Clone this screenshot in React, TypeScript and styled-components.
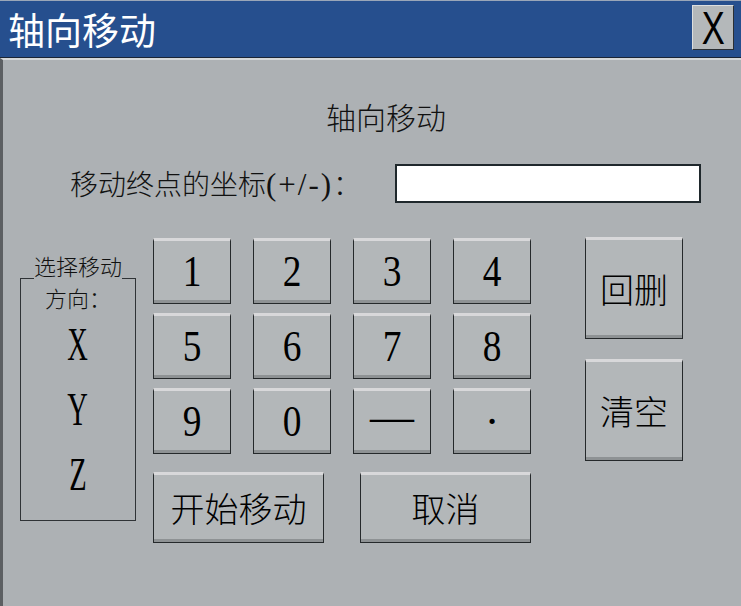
import styled, { createGlobalStyle } from "styled-components";

const GlobalStyle = createGlobalStyle`
	html, body {
		margin: 0;
		padding: 0;
		background: #adb1b4;
	}
`;

const cjk = `"Noto Sans CJK SC", sans-serif`;
const serif = `"Liberation Serif", "Noto Sans CJK SC", serif`;

const StyledWindow = styled.div`
	width: 741px;
	height: 606px;
	display: flex;
	flex-direction: column;
	background: #adb1b4;
	overflow: hidden;
`;

const StyledTitleBar = styled.div`
	height: 56px;
	background: #264f8e;
	border-top: 1px solid #9aa6b8;
	border-bottom: 1px solid #1b2535;
	display: flex;
	align-items: center;
	justify-content: space-between;
	padding: 0 7px 0 8px;
`;

const StyledTitle = styled.div`
	color: #ffffff;
	font-family: ${cjk};
	font-size: 37px;
	line-height: 40px;
`;

const StyledClose = styled.div`
	width: 40px;
	height: 43px;
	background: #b4b8ba;
	border: 1px solid #2b2f33;
	border-top-color: #dcdedf;
	border-left-color: #dcdedf;
	display: flex;
	align-items: center;
	justify-content: center;
	font-family: "Liberation Sans", sans-serif;
	font-size: 46px;
	color: #000;
	margin-top: -3px;
`;

const StyledNarrow = styled.span<{ $scale: number }>`
	display: inline-block;
	transform: scaleX(${(p) => p.$scale});
`;

const StyledBody = styled.div`
	flex: 1;
	border-top: 2px solid #d6d8d9;
	border-left: 3px solid #5c5f62;
	display: flex;
	flex-direction: column;
`;

const StyledHeading = styled.div`
	margin-top: 39px;
	padding-left: 28px;
	text-align: center;
	font-family: ${cjk};
	font-weight: 300;
	font-size: 30px;
	line-height: 35px;
	color: #111;
`;

const StyledFieldRow = styled.div`
	margin-top: 29px;
	padding-left: 67px;
	display: flex;
	align-items: center;
	gap: 17px;
`;

const StyledLabel = styled.div`
	width: 308px;
	white-space: nowrap;
	font-family: ${serif};
	font-weight: 300;
	font-size: 28px;
	color: #111;

	span {
		font-size: 31px;
		letter-spacing: 2px;
	}
`;

const StyledInput = styled.div`
	width: 302px;
	height: 35px;
	background: #ffffff;
	border: 2px solid #1f282c;
`;

const StyledMain = styled.div`
	margin-top: 34px;
	padding-left: 17px;
	display: flex;
	align-items: flex-start;
`;

const StyledGroup = styled.div`
	position: relative;
	margin-top: 41px;
	width: 114px;
	height: 234px;
	border: 1px solid #2f3336;
	display: flex;
	flex-direction: column;
	align-items: center;
	padding-top: 7px;
`;

const StyledCaption = styled.div`
	position: absolute;
	top: -24px;
	left: 0;
	right: 0;
	text-align: center;
	font-family: ${cjk};
	font-weight: 300;
	font-size: 22px;
	line-height: 20px;
	color: #111;

	span {
		background: #adb1b4;
	}
`;

const StyledSubCaption = styled.div`
	font-family: ${cjk};
	font-weight: 300;
	font-size: 22px;
	line-height: 22px;
	color: #111;
	margin-bottom: 4px;
`;

const StyledAxis = styled.div`
	height: 65px;
	display: flex;
	align-items: center;
	font-family: ${serif};
	font-size: 46px;
	color: #000;
`;

const StyledPad = styled.div`
	margin-left: 17px;
	margin-top: 1px;
	display: flex;
	flex-direction: column;
	gap: 18px;
`;

const StyledGrid = styled.div`
	display: grid;
	grid-template-columns: repeat(4, 78px);
	grid-auto-rows: 66px;
	column-gap: 22px;
	row-gap: 9px;
`;

const StyledKey = styled.div<{ $w?: number; $h?: number; $cjk?: boolean }>`
	box-sizing: border-box;
	width: ${(p) => (p.$w ? `${p.$w}px` : "auto")};
	height: ${(p) => (p.$h ? `${p.$h}px` : "auto")};
	background: #b3b7b9;
	border: 1px solid #25292b;
	border-top: 3px solid #d8d8da;
	box-shadow: inset 0 -3px 0 #8e9294;
	display: flex;
	align-items: center;
	justify-content: center;
	font-family: ${(p) => (p.$cjk ? cjk : serif)};
	font-weight: ${(p) => (p.$cjk ? 300 : 400)};
	font-size: ${(p) => (p.$cjk ? "34px" : "44px")};
	color: #000;
	padding-bottom: 2px;
`;

const StyledDash = styled.span`
	display: inline-block;
	margin-bottom: 10px;
`;

const StyledActions = styled.div`
	display: flex;
	gap: 36px;
`;

const StyledSide = styled.div`
	margin-left: 54px;
	display: flex;
	flex-direction: column;
	gap: 20px;
`;

const keys = ["1", "2", "3", "4", "5", "6", "7", "8", "9", "0", "—", "·"];

const App = (): JSX.Element => {
	return (
		<StyledWindow>
			<GlobalStyle />
			<StyledTitleBar>
				<StyledTitle>轴向移动</StyledTitle>
				<StyledClose>
					<StyledNarrow $scale={0.75}>X</StyledNarrow>
				</StyledClose>
			</StyledTitleBar>

			<StyledBody>
				<StyledHeading>轴向移动</StyledHeading>

				<StyledFieldRow>
					<StyledLabel>
						移动终点的坐标<span>(+/-)</span>：
					</StyledLabel>
					<StyledInput />
				</StyledFieldRow>

				<StyledMain>
					<StyledGroup>
						<StyledCaption>
							<span>选择移动</span>
						</StyledCaption>
						<StyledSubCaption>方向：</StyledSubCaption>
						{["X", "Y", "Z"].map((a) => (
							<StyledAxis key={a}>
								<StyledNarrow $scale={0.62}>{a}</StyledNarrow>
							</StyledAxis>
						))}
					</StyledGroup>

					<StyledPad>
						<StyledGrid>
							{keys.map((k) =>
								k === "—" ? (
									<StyledKey key={k}>
										<StyledDash>{k}</StyledDash>
									</StyledKey>
								) : k === "·" ? (
									<StyledKey key={k}>{k}</StyledKey>
								) : (
									<StyledKey key={k}>
										<StyledNarrow $scale={0.85}>{k}</StyledNarrow>
									</StyledKey>
								)
							)}
						</StyledGrid>
						<StyledActions>
							<StyledKey $w={171} $h={71} $cjk>
								开始移动
							</StyledKey>
							<StyledKey $w={171} $h={71} $cjk>
								取消
							</StyledKey>
						</StyledActions>
					</StyledPad>

					<StyledSide>
						<StyledKey $w={98} $h={102} $cjk>
							回删
						</StyledKey>
						<StyledKey $w={98} $h={102} $cjk>
							清空
						</StyledKey>
					</StyledSide>
				</StyledMain>
			</StyledBody>
		</StyledWindow>
	);
};

export default App;
